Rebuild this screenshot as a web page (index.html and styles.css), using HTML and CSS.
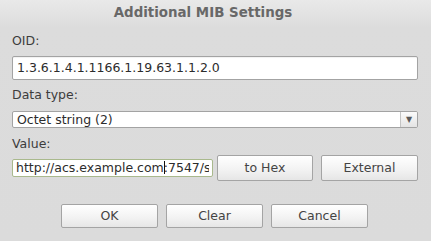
FILE: index.html
```html
<!DOCTYPE html>
<html>
<head>
<meta charset="utf-8">
<link rel="stylesheet" href="styles.css">
</head>
<body>
<div class="dialog">
  <div class="title">Additional MIB Settings</div>
  <div class="label label-oid">OID:</div>
  <div class="field field-oid">1.3.6.1.4.1.1166.1.19.63.1.1.2.0</div>
  <div class="label label-type">Data type:</div>
  <div class="combo">
    <div class="combo-text">Octet string (2)</div>
    <div class="combo-arrow">&#9660;</div>
  </div>
  <div class="label label-value">Value:</div>
  <div class="value-row">
    <div class="field field-value"><span class="value-text">http://acs.example.com<span class="caret"></span>:7547/s</span></div>
    <div class="btn btn-hex">to Hex</div>
    <div class="btn btn-ext">External</div>
  </div>
  <div class="actions">
    <div class="btn btn-action">OK</div>
    <div class="btn btn-action">Clear</div>
    <div class="btn btn-action">Cancel</div>
  </div>
</div>
</body>
</html>
```
FILE: styles.css
```css
html, body {
  margin: 0;
  padding: 0;
}
body {
  width: 431px;
  height: 241px;
  overflow: hidden;
  background: linear-gradient(#e9e9e9 0px, #dcdcdc 28px, #dbdbdb 100%);
  font-family: "DejaVu Sans", sans-serif;
  font-size: 12.5px;
  color: #3a3a3a;
}
.dialog {
  padding: 0 13px 0 12px;
  display: flex;
  flex-direction: column;
}
.title {
  height: 25px;
  line-height: 25px;
  font-weight: bold;
  font-size: 13.4px;
  color: #686868;
  text-align: center;
  padding-right: 24px;
  margin-bottom: 8px;
}
.label {
  height: 16px;
  line-height: 16px;
  color: #3c3c3c;
  white-space: nowrap;
}
.label-oid { margin-bottom: 7px; }
.label-type { margin-top: 7px; margin-bottom: 8px; }
.label-value { margin-top: 8px; margin-bottom: 3px; }
.field {
  box-sizing: border-box;
  background: #ffffff;
  border: 1px solid #a3a3a3;
  border-radius: 2px;
  color: #2c2c2c;
  white-space: nowrap;
  overflow: hidden;
  padding: 0 4px;
}
.field-oid {
  height: 24px;
  line-height: 22px;
  box-shadow: inset 0 1px 1px rgba(0,0,0,0.06);
}
.combo {
  box-sizing: border-box;
  height: 17px;
  display: flex;
  background: #ffffff;
  border: 1px solid #a3a3a3;
  border-radius: 2px;
  overflow: hidden;
}
.combo-text {
  flex: 1;
  line-height: 15px;
  padding: 0 4px;
  color: #2c2c2c;
  white-space: nowrap;
}
.combo-arrow {
  width: 16px;
  border-left: 1px solid #c4c4c4;
  background: linear-gradient(#fbfbfb, #e4e4e4);
  color: #5a5a5a;
  font-size: 8px;
  line-height: 15px;
  text-align: center;
}
.value-row {
  display: flex;
  align-items: center;
  height: 26px;
}
.field-value {
  flex: 1;
  min-width: 0;
  height: 18px;
  line-height: 16px;
  border-color: #a9b98d;
  padding: 0 3px;
  margin-right: 4px;
}
.value-text {
  display: block;
  overflow: hidden;
  white-space: nowrap;
}
.caret {
  display: inline-block;
  width: 1px;
  height: 13px;
  background: #111;
  vertical-align: -2px;
  margin-right: -1px;
}
.btn {
  box-sizing: border-box;
  border: 1px solid #a4a4a4;
  border-radius: 2px;
  background: linear-gradient(#ffffff 0%, #f3f3f3 55%, #e6e6e6 100%);
  color: #444444;
  text-align: center;
  white-space: nowrap;
}
.btn-hex {
  width: 96px;
  height: 26px;
  line-height: 24px;
  margin-right: 8px;
}
.btn-ext {
  width: 97px;
  height: 26px;
  line-height: 24px;
}
.actions {
  margin-top: 23px;
  display: flex;
  justify-content: center;
  gap: 8px;
  padding-right: 1px;
}
.btn-action {
  width: 97px;
  height: 24px;
  line-height: 22px;
}
```
